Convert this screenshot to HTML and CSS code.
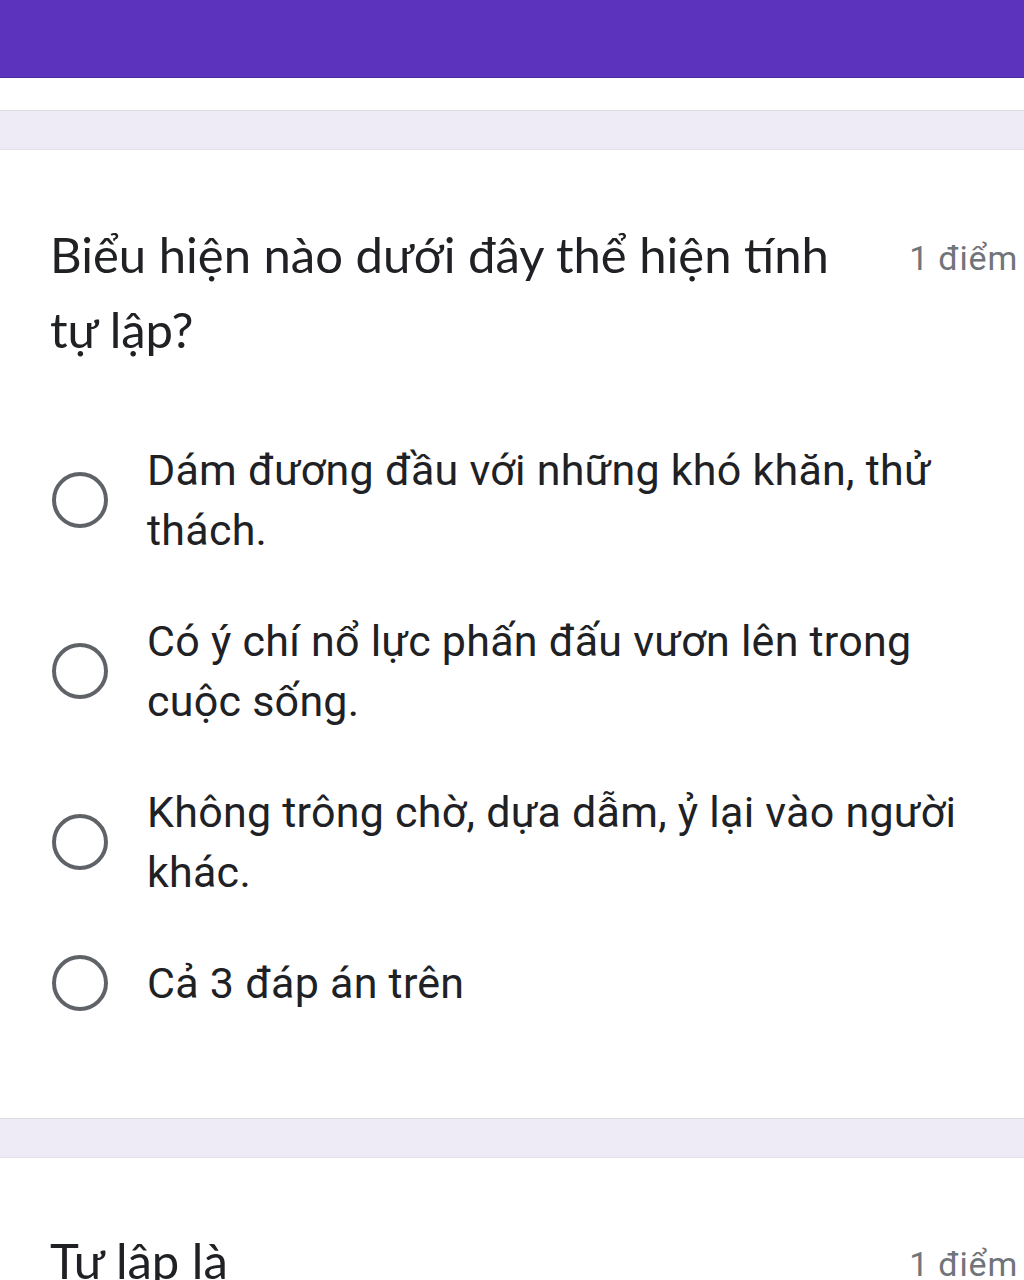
FILE: index.html
```html
<!DOCTYPE html>
<html lang="vi">
<head>
<meta charset="utf-8">
<title>Biểu mẫu</title>
<link rel="stylesheet" href="styles.css">
</head>
<body>
<header class="topbar"></header>
<div class="spacer"></div>
<div class="band"></div>
<section class="card">
  <div class="q-head">
    <h2 class="q-title">Biểu hiện nào dưới đây thể hiện tính tự lập?</h2>
    <span class="q-points">1 điểm</span>
  </div>
  <ul class="options">
    <li class="option"><span class="radio"></span><span class="opt-text">Dám đương đầu với những khó khăn, thử thách.</span></li>
    <li class="option"><span class="radio"></span><span class="opt-text">Có ý chí nổ lực phấn đấu vươn lên trong cuộc sống.</span></li>
    <li class="option"><span class="radio"></span><span class="opt-text">Không trông chờ, dựa dẫm, ỷ lại vào người khác.</span></li>
    <li class="option"><span class="radio"></span><span class="opt-text">Cả 3 đáp án trên</span></li>
  </ul>
</section>
<div class="band"></div>
<section class="card card-next">
  <div class="q-head">
    <h2 class="q-title">Tự lập là</h2>
    <span class="q-points">1 điểm</span>
  </div>
</section>
</body>
</html>
```

FILE: styles.css
```css
html, body {
  margin: 0;
  padding: 0;
  background: #ffffff;
}
body {
  font-family: Roboto, "Liberation Sans", sans-serif;
  color: #202124;
  overflow: hidden;
}
.topbar {
  height: 77px;
  background: #5b33bc;
  border-bottom: 1px solid #4b2a9c;
}
.spacer {
  height: 32px;
  background: #ffffff;
}
.band {
  height: 38px;
  background: #eeebf7;
  border-top: 1px solid #dedde3;
  border-bottom: 1px solid #e2e1e8;
}
.card {
  padding: 67px 6px 105px 50px;
}
.q-head {
  display: flex;
  align-items: flex-start;
}
.q-title {
  flex: 1;
  margin: 0;
  max-width: 810px;
  font-family: Lato, Roboto, sans-serif;
  font-weight: 400;
  font-size: 49px;
  line-height: 75px;
  color: #202124;
}
.q-points {
  margin-left: auto;
  margin-top: 4px;
  font-size: 34px;
  letter-spacing: 0.8px;
  line-height: 75px;
  color: #70757a;
  white-space: nowrap;
}
.options {
  list-style: none;
  margin: 73px 0 0 0;
  padding: 0;
  display: flex;
  flex-direction: column;
  gap: 51px;
}
.option {
  display: flex;
  align-items: center;
  gap: 39px;
}
.radio {
  flex: none;
  width: 48px;
  height: 48px;
  margin-left: 2px;
  border: 4px solid #5f6368;
  border-radius: 50%;
}
.opt-text {
  font-size: 43px;
  letter-spacing: 0.25px;
  line-height: 60px;
  color: #202124;
  max-width: 830px;
}
.card-next {
  padding-top: 65px;
}
```
